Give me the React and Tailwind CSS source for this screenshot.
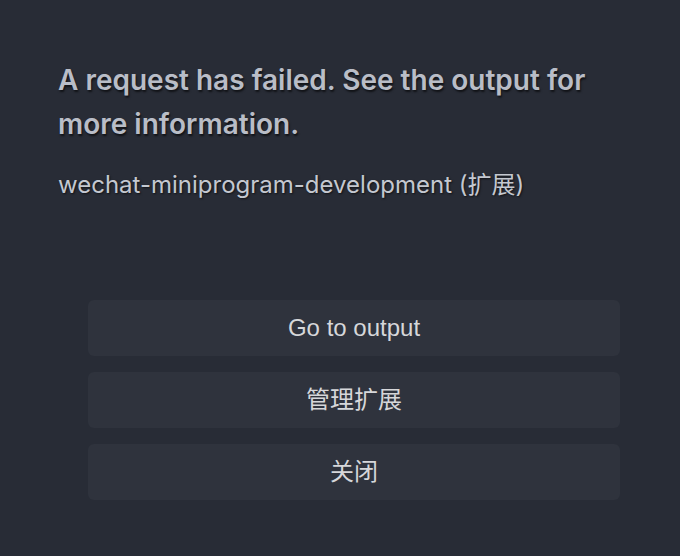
import React from "react";

export default function App() {
  const buttons = ["Go to output", "管理扩展", "关闭"];
  return (
    <div className="w-[680px] h-[556px] bg-[#282c36] overflow-hidden">
      <div className="pt-[58px] pl-[58px] w-[640px]">
        <h1 className="text-[28px] leading-[44px] font-semibold text-[#b9bdc7] [font-family:Inter,'Noto_Sans_CJK_SC',sans-serif] [text-shadow:1px_2px_2px_rgba(0,0,0,0.6)]">
          A request has failed. See the output for more information.
        </h1>
        <p className="mt-[22px] text-[24px] leading-[34px] text-[#c4c8d0] [font-family:Inter,'Noto_Sans_CJK_SC',sans-serif] [text-shadow:1px_1px_2px_rgba(0,0,0,0.6)]">
          wechat-miniprogram-development (扩展)
        </p>
      </div>
      <div className="mt-[98px] ml-[88px] w-[532px] flex flex-col gap-[16px]">
        {buttons.map((b) => (
          <div
            key={b}
            className="h-[56px] rounded-[6px] bg-[#2f333d] flex items-center justify-center text-[24px] text-[#d6d7da] [font-family:'Liberation_Sans','Noto_Sans_CJK_SC',sans-serif]"
          >
            {b}
          </div>
        ))}
      </div>
    </div>
  );
}
